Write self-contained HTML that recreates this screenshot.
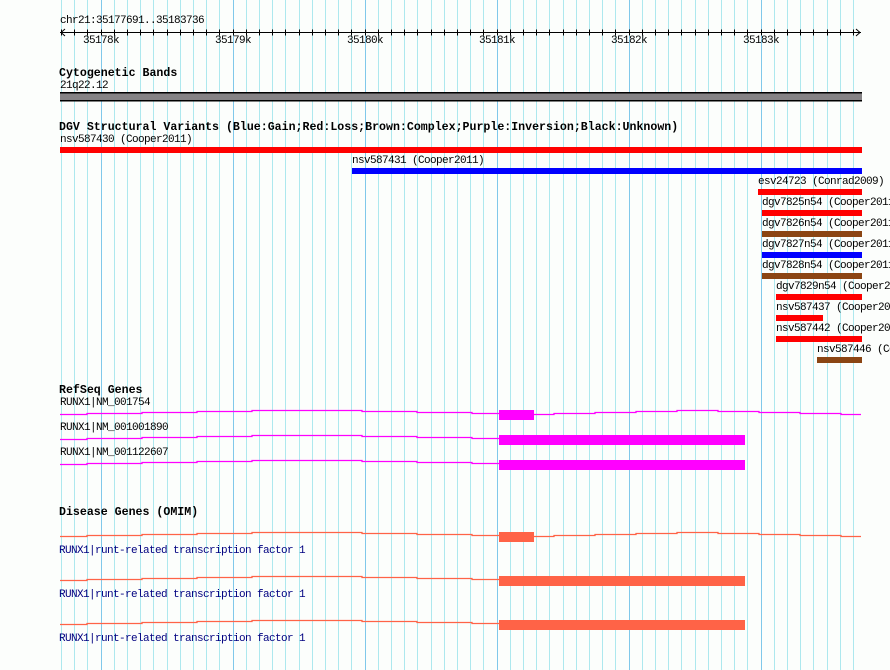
<!DOCTYPE html>
<html><head><meta charset="utf-8"><style>
html,body{margin:0;padding:0;width:890px;height:670px;overflow:hidden;background:#fcfefc;}
#w{position:absolute;left:0;top:0;width:890px;height:670px;overflow:hidden;}
.t{position:absolute;font-family:"Liberation Mono",monospace;font-size:11px;letter-spacing:-0.6px;line-height:11px;white-space:nowrap;color:#000;}
.b{font-weight:bold;font-size:11.6px;letter-spacing:0;line-height:12px;}
.n{color:#000080;}
</style></head><body><div id="w">
<svg width="890" height="670" style="position:absolute;left:0;top:0" xmlns="http://www.w3.org/2000/svg">
<g id="grid"></g>
<line x1="60" y1="32.5" x2="861" y2="32.5" stroke="#000"/>
<g id="ticks" stroke="#000"></g>
<path d="M65 29 L61 32.5 L65 36 M856 29 L860 32.5 L856 36" stroke="#000" fill="none"/>
<rect x="60" y="93" width="802" height="8" fill="#858385"/>
<rect x="60" y="92" width="802" height="1.5" fill="#000"/>
<rect x="60" y="100" width="802" height="1.5" fill="#000"/>
<rect x="60" y="147" width="802" height="6" fill="#ff0000"/>
<rect x="352" y="168" width="510" height="6" fill="#0000ff"/>
<rect x="758" y="189" width="104" height="6" fill="#ff0000"/>
<rect x="762" y="210" width="100" height="6" fill="#ff0000"/>
<rect x="762" y="231" width="100" height="6" fill="#8b4513"/>
<rect x="762" y="252" width="100" height="6" fill="#0000ff"/>
<rect x="762" y="273" width="100" height="6" fill="#8b4513"/>
<rect x="776" y="294" width="86" height="6" fill="#ff0000"/>
<rect x="776" y="315" width="47" height="6" fill="#ff0000"/>
<rect x="776" y="336" width="86" height="6" fill="#ff0000"/>
<rect x="817" y="357" width="45" height="6" fill="#8b4513"/>
<g id="genes"></g>
</svg>
<script>
(function(){
var ns="http://www.w3.org/2000/svg",g=document.getElementById('grid'),tk=document.getElementById('ticks');
for(var i=0;i<61;i++){var x=61+13.2*i;if(x>862)break;var l=document.createElementNS(ns,'line');
x=Math.round(x)+0.5;l.setAttribute('x1',x);l.setAttribute('x2',x);l.setAttribute('y1',0);l.setAttribute('y2',670);
l.setAttribute('stroke',(i%10==3)?'#80c8ea':'#ade8ee');l.setAttribute('stroke-width','1');g.appendChild(l);
var t=document.createElementNS(ns,'line');t.setAttribute('x1',x);t.setAttribute('x2',x);t.setAttribute('y1',29.5);t.setAttribute('y2',35.5);tk.appendChild(t);}
var gn=document.getElementById('genes');
var L=[[60,0],[87,-1],[142,-2],[197,-3],[252,-4],[307,-4],[362,-3],[417,-2],[472,-1],[499,0]];
var R=[[499,0],[554,-1],[595,-2],[636,-3],[677,-4],[718,-3],[759,-2],[800,-1],[841,0],[861,0]];
function path(pts,y,col){var d='M'+pts[0][0]+' '+y;
 for(var i=0;i<pts.length-1;i++){var yy=y+pts[i][1];d+=' L'+pts[i][0]+' '+yy+' L'+pts[i+1][0]+' '+yy;}
 var p=document.createElementNS(ns,'path');p.setAttribute('d',d);p.setAttribute('stroke',col);p.setAttribute('fill','none');p.setAttribute('stroke-width','1.3');gn.appendChild(p);}
function gene(y,col,boxEnd,by){
 path(L,y,col); if(boxEnd<600) path(R,y,col);
 var r=document.createElementNS(ns,'rect');r.setAttribute('x',499);r.setAttribute('y',by);r.setAttribute('width',boxEnd-499);r.setAttribute('height',10);r.setAttribute('fill',col);gn.appendChild(r);
}
gene(414.5,'#ff00ff',534,410);
gene(439.5,'#ff00ff',745,435);
gene(464.5,'#ff00ff',745,460);
gene(536.5,'#ff6347',534,532);
gene(580.5,'#ff6347',745,576);
gene(624.5,'#ff6347',745,620);
})();
</script>
<div class="t" style="left:60px;top:16px">chr21:35177691..35183736</div>
<div class="t" style="left:83px;top:36px">35178k</div>
<div class="t" style="left:215px;top:36px">35179k</div>
<div class="t" style="left:347px;top:36px">35180k</div>
<div class="t" style="left:479px;top:36px">35181k</div>
<div class="t" style="left:611px;top:36px">35182k</div>
<div class="t" style="left:743px;top:36px">35183k</div>
<div class="t b" style="left:59px;top:68px">Cytogenetic Bands</div>
<div class="t" style="left:60px;top:81px">21q22.12</div>
<div class="t b" style="left:59px;top:122px">DGV Structural Variants (Blue:Gain;Red:Loss;Brown:Complex;Purple:Inversion;Black:Unknown)</div>
<div class="t" style="left:60px;top:135px">nsv587430 (Cooper2011)</div>
<div class="t" style="left:352px;top:156px">nsv587431 (Cooper2011)</div>
<div class="t" style="left:758px;top:177px">esv24723 (Conrad2009)</div>
<div class="t" style="left:762px;top:198px">dgv7825n54 (Cooper2011)</div>
<div class="t" style="left:762px;top:219px">dgv7826n54 (Cooper2011)</div>
<div class="t" style="left:762px;top:240px">dgv7827n54 (Cooper2011)</div>
<div class="t" style="left:762px;top:261px">dgv7828n54 (Cooper2011)</div>
<div class="t" style="left:776px;top:282px">dgv7829n54 (Cooper2011)</div>
<div class="t" style="left:776px;top:303px">nsv587437 (Cooper2011)</div>
<div class="t" style="left:776px;top:324px">nsv587442 (Cooper2011)</div>
<div class="t" style="left:817px;top:345px">nsv587446 (Cooper2011)</div>
<div class="t b" style="left:59px;top:385px">RefSeq Genes</div>
<div class="t" style="left:60px;top:398px">RUNX1|NM_001754</div>
<div class="t" style="left:60px;top:423px">RUNX1|NM_001001890</div>
<div class="t" style="left:60px;top:448px">RUNX1|NM_001122607</div>
<div class="t b" style="left:59px;top:507px">Disease Genes (OMIM)</div>
<div class="t n" style="left:59px;top:546px">RUNX1|runt-related transcription factor 1</div>
<div class="t n" style="left:59px;top:590px">RUNX1|runt-related transcription factor 1</div>
<div class="t n" style="left:59px;top:634px">RUNX1|runt-related transcription factor 1</div>
</div></body></html>
